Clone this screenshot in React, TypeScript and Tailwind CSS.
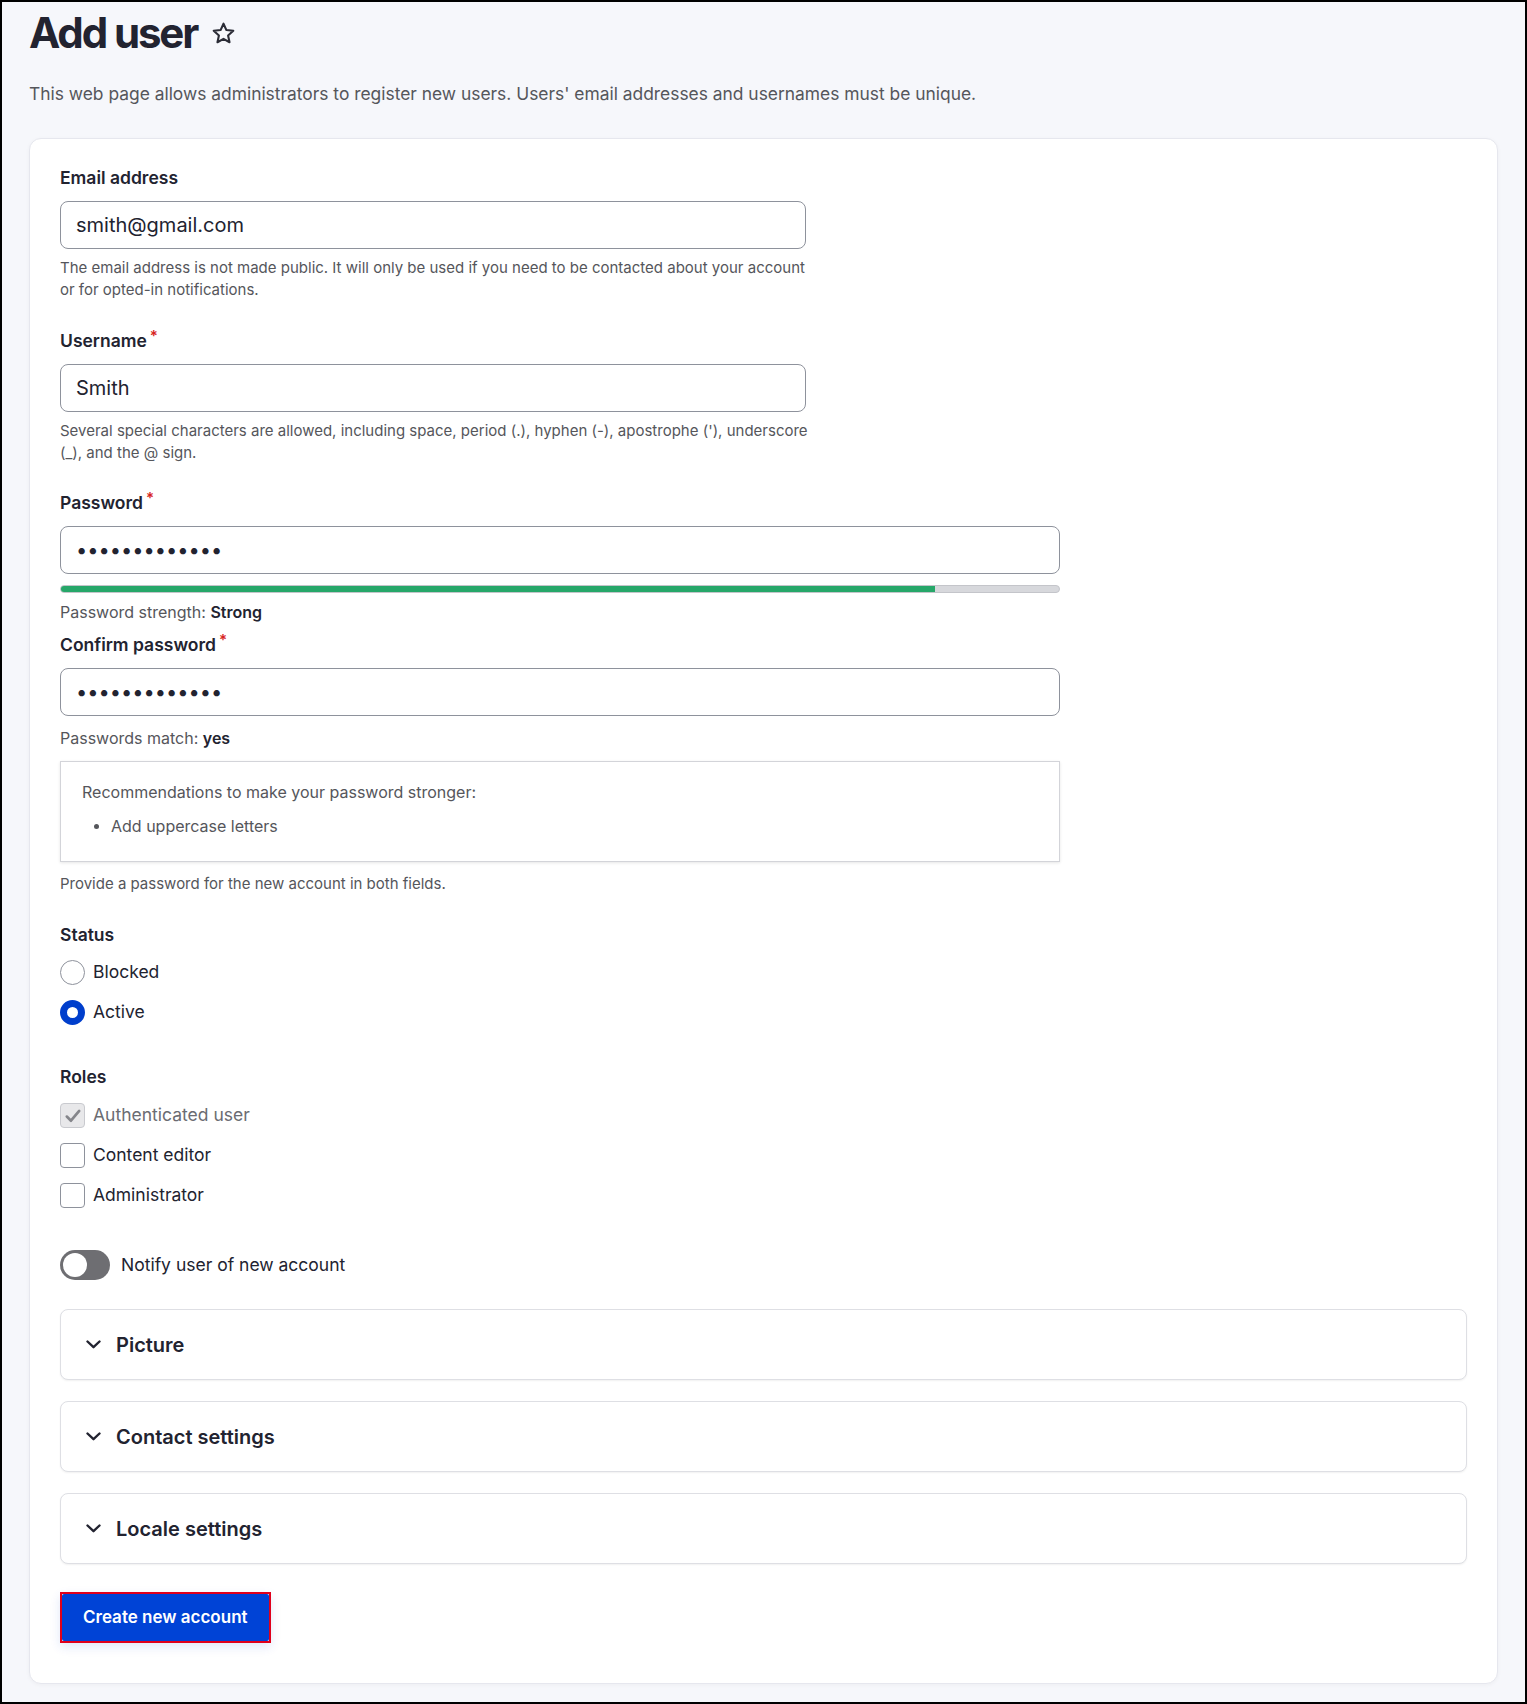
import { useState } from 'react';

const font = { fontFamily: 'Inter, "Noto Sans", sans-serif' };

function Label({ text, required, className = 'mb-[10px]' }: { text: string; required?: boolean; className?: string }) {
  return (
    <div className={`text-[17.5px] leading-[27px] font-semibold text-[#222330] ${className}`}>
      {text}
      {required && <span className="ml-[3px] align-top text-[15px] leading-[18px] text-[#d72222]">*</span>}
    </div>
  );
}

function Help({ children, className = '' }: { children: React.ReactNode; className?: string }) {
  return <div className={`text-[15px] leading-[22px] text-[#55565b] ${className}`}>{children}</div>;
}

function Status({ children, className = '' }: { children: React.ReactNode; className?: string }) {
  return <div className={`text-[16px] leading-[22px] text-[#55565b] ${className}`}>{children}</div>;
}

function TextInput({ value, type = 'text', wide }: { value: string; type?: string; wide?: boolean }) {
  return (
    <input
      type={type}
      defaultValue={value}
      readOnly
      className={`${wide ? 'w-[1000px]' : 'w-[746px]'} block h-[48px] rounded-[8px] border border-[#8e929c] bg-white px-[15px] text-[20px] text-[#222330] outline-none`}
    />
  );
}

function Radio({ label, checked }: { label: string; checked?: boolean }) {
  return (
    <label className="flex h-[25px] items-center gap-[8px] text-[17.5px] text-[#222330]">
      {checked ? (
        <span className="box-border h-[25px] w-[25px] rounded-full border-[7px] border-[#003ecc] bg-white" />
      ) : (
        <span className="box-border h-[25px] w-[25px] rounded-full border border-[#8e929c] bg-white" />
      )}
      {label}
    </label>
  );
}

function Checkbox({ label, checked, disabled }: { label: string; checked?: boolean; disabled?: boolean }) {
  return (
    <label className={`flex h-[25px] items-center gap-[8px] text-[17.5px] ${disabled ? 'text-[#6b6c72]' : 'text-[#222330]'}`}>
      <span
        className={`box-border flex h-[25px] w-[25px] items-center justify-center rounded-[4px] border ${
          disabled ? 'border-[#c9cacf] bg-[#e8e8ea]' : 'border-[#8e929c] bg-white'
        }`}
      >
        {checked && (
          <svg width="18" height="18" viewBox="0 0 16 16" fill="none">
            <path d="M2.5 8.5 L6.2 12.2 L13.5 3.5" stroke="#85868b" strokeWidth="2.4" strokeLinecap="round" strokeLinejoin="round" />
          </svg>
        )}
      </span>
      {label}
    </label>
  );
}

function Details({ title }: { title: string }) {
  return (
    <div className="flex h-[71px] items-center gap-[15px] rounded-[8px] border border-[#dedfe4] bg-white px-[25px] shadow-[0_1px_2px_rgba(0,0,0,0.06)]">
      <svg width="15" height="9" viewBox="0 0 15 9" fill="none">
        <path d="M1.5 1.5 L7.5 7.2 L13.5 1.5" stroke="#222330" strokeWidth="2.4" strokeLinecap="round" strokeLinejoin="round" />
      </svg>
      <span className="text-[20px] font-semibold text-[#222330]">{title}</span>
    </div>
  );
}

export default function App() {
  const [notify, setNotify] = useState(false);

  return (
    <div style={font} className="box-border min-h-[1704px] border-2 border-black bg-[#f6f7fb] px-[27px] pt-[4px] pb-[17px]">
      {/* Title */}
      <div className="flex items-center gap-[14px]">
        <h1 className="text-[42px] leading-[53px] font-bold tracking-[-0.05em] text-[#222330]">Add user</h1>
        <svg width="25" height="25" viewBox="0 0 24 24" fill="none" className="mt-[2px]">
          <path
            d="M12 2.6 L14.8 8.7 L21.4 9.4 L16.4 13.9 L17.8 20.4 L12 17.1 L6.2 20.4 L7.6 13.9 L2.6 9.4 L9.2 8.7 Z"
            stroke="#2b2c36"
            strokeWidth="2"
            strokeLinejoin="round"
          />
        </svg>
      </div>
      <p className="mt-[21px] text-[17.4px] leading-[27px] text-[#55565b]">
        This web page allows administrators to register new users. Users' email addresses and usernames must be unique.
      </p>

      {/* Form card */}
      <div className="mt-[31px] rounded-[12px] border border-[#e6e7ee] bg-white px-[30px] pt-[25px] pb-[40px] shadow-[0_1px_4px_rgba(0,0,0,0.04)]">
        <div>
          <Label text="Email address" />
          <TextInput value="smith@gmail.com" />
          <Help className="mt-[8px] w-[755px]">
            The email address is not made public. It will only be used if you need to be contacted about your account or for opted-in notifications.
          </Help>
        </div>

        <div className="mt-[26px]">
          <Label text="Username" required />
          <TextInput value="Smith" />
          <Help className="mt-[8px] w-[755px]">
            Several special characters are allowed, including space, period (.), hyphen (-), apostrophe ('), underscore (_), and the @ sign.
          </Help>
        </div>

        <div className="mt-[25px]">
          <Label text="Password" required />
          <TextInput value="Password12345" type="password" wide />
          <div className="mt-[11px] h-[8px] w-[1000px] overflow-hidden rounded-full border border-[#c4c5ca] bg-[#d7d8dc]">
            <div className="h-full bg-[#26a769]" style={{ width: '87.6%' }} />
          </div>
          <Status className="mt-[8px]">
            Password strength: <span className="font-semibold text-[#222330]">Strong</span>
          </Status>
        </div>

        <div className="mt-[8px]">
          <Label text="Confirm password" required />
          <TextInput value="Password12345" type="password" wide />
          <Status className="mt-[11px]">
            Passwords match: <span className="font-semibold text-[#222330]">yes</span>
          </Status>
          <div className="mt-[12px] w-[1000px] border border-[#d3d4d9] bg-white px-[21px] pt-[19px] pb-[24px] shadow-[0_1px_3px_rgba(0,0,0,0.1)]">
            <Status>Recommendations to make your password stronger:</Status>
            <ul className="mt-[12px]">
              <li className="flex items-center text-[16px] leading-[22px] text-[#55565b]">
                <span className="ml-[12px] mr-[12px] h-[5px] w-[5px] rounded-full bg-[#55565b]" />
                Add uppercase letters
              </li>
            </ul>
          </div>
          <Help className="mt-[11px]">Provide a password for the new account in both fields.</Help>
        </div>

        {/* Status */}
        <div className="mt-[26px]">
          <Label text="Status" className="mb-[12px]" />
          <div className="flex flex-col gap-[15px]">
            <Radio label="Blocked" />
            <Radio label="Active" checked />
          </div>
        </div>

        {/* Roles */}
        <div className="mt-[38px]">
          <Label text="Roles" className="mb-[13px]" />
          <div className="flex flex-col gap-[15px]">
            <Checkbox label="Authenticated user" checked disabled />
            <Checkbox label="Content editor" />
            <Checkbox label="Administrator" />
          </div>
        </div>

        {/* Notify toggle */}
        <button
          type="button"
          onClick={() => setNotify(!notify)}
          className="mt-[42px] flex items-center gap-[11px] text-[17.5px] text-[#222330]"
        >
          <span className={`flex h-[30px] w-[50px] items-center rounded-full px-[3px] ${notify ? 'justify-end bg-[#003ecc]' : 'bg-[#6e6e72]'}`}>
            <span className="h-[24px] w-[24px] rounded-full bg-white" />
          </span>
          Notify user of new account
        </button>

        {/* Collapsible sections */}
        <div className="mt-[29px] flex flex-col gap-[21px]">
          <Details title="Picture" />
          <Details title="Contact settings" />
          <Details title="Locale settings" />
        </div>

        <div className="mt-[28px] inline-block border-2 border-[#e0001b] shadow-[0_4px_10px_rgba(0,62,204,0.12)]">
          <button type="button" className="flex h-[47px] items-center rounded-[2px] bg-[#0043d6] px-[21px] text-[17px] font-semibold text-white">
            Create new account
          </button>
        </div>
      </div>
    </div>
  );
}
